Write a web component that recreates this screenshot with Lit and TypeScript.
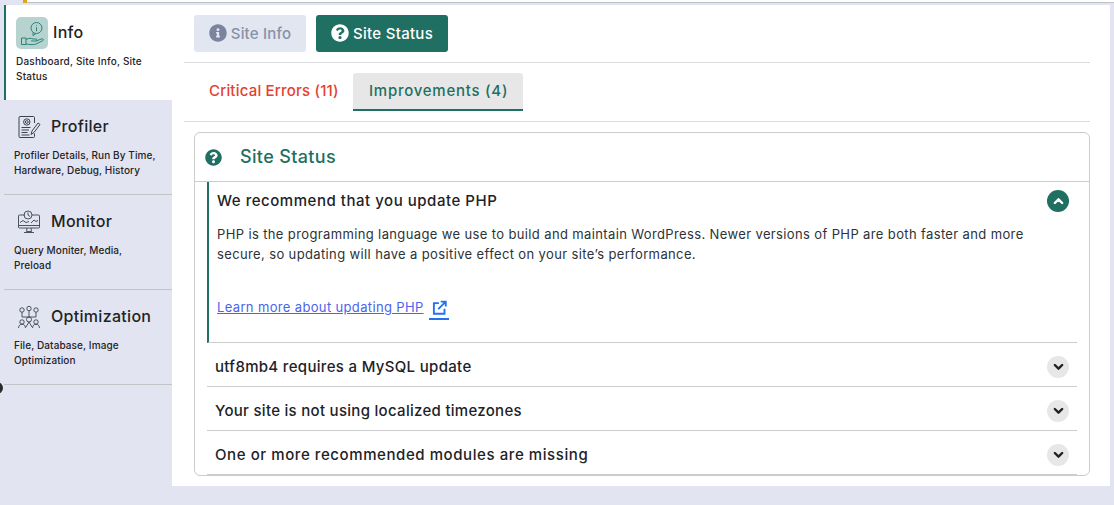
import { LitElement, html, css } from "lit";
import { customElement } from "lit/decorators.js";

const questionIcon = html`<svg viewBox="0 0 512 512"><path fill="currentColor" d="M504 256c0 137-111 248-248 248S8 393 8 256C8 119 119 8 256 8s248 111 248 248zM262.700 90c-54.500 0-89.300 23-116.500 63.800-3.500 5.300-2.400 12.400 2.700 16.300l34.700 26.300c5.200 3.900 12.600 3 16.700-2.100 17.900-22.700 30.100-35.800 57.300-35.800 20.400 0 45.700 13.100 45.700 32.900 0 15-12.400 22.700-32.500 34-23.500 13.200-54.600 29.600-54.600 70.700V300c0 6.600 5.400 12 12 12h56c6.600 0 12-5.400 12-12v-1.300c0-28.500 83.200-29.700 83.200-106.700 0-58-60.200-102-116.500-102zM256 338c-25.400 0-46 20.600-46 46 0 25.400 20.600 46 46 46s46-20.600 46-46c0-25.400-20.600-46-46-46z"/></svg>`;

const infoIcon = html`<svg viewBox="0 0 512 512"><path fill="#7a849c" d="M256 8C119 8 8 119 8 256c0 137 111 248 248 248s248-111 248-248C504 119 393 8 256 8zm0 110c23.200 0 42 18.800 42 42s-18.800 42-42 42-42-18.800-42-42 18.800-42 42-42zm56 254c0 6.600-5.400 12-12 12h-88c-6.600 0-12-5.400-12-12v-24c0-6.600 5.400-12 12-12h12v-64h-12c-6.600 0-12-5.400-12-12v-24c0-6.600 5.400-12 12-12h64c6.600 0 12 5.400 12 12v100h12c6.600 0 12 5.400 12 12v24z"/></svg>`;

const chevron = (up: boolean) => html`<svg class="chev" viewBox="0 0 12 8"><path fill="none" stroke="currentColor" stroke-width="2.600" stroke-linecap="round" stroke-linejoin="round" d=${up ? "M2 6.200 6 2.200l4 4" : "M2 1.800l4 4 4-4"}/></svg>`;

const handIcon = html`<svg class="mi" viewBox="0 0 32 32" fill="none" stroke="#2a8378" stroke-width="1"><circle cx="20.500" cy="11" r="5.500"/><path d="M17 15.500v3.200l3-2.300M20.500 8.200v.8M20.500 10.200v4"/><path d="M5.500 21h4.500v6.500H5.500zM10 22.500c3-1.500 5-1.500 7-.5h3c1.200 0 1.200 2-.2 2H15m5 0 6-2.200c1.500-.3 2 1.200.8 1.900l-7.300 3.500c-3 .8-6 .3-9.500-.2"/></svg>`;

const profilerIcon = html`<svg class="si" viewBox="0 0 24 24" fill="none" stroke="#39424e" stroke-width="1"><path d="M17.500 8V2.500a1 1 0 0 0-1-1H3a1 1 0 0 0-1 1v19a1 1 0 0 0 1 1h13.500a1 1 0 0 0 1-1v-3"/><circle cx="9.800" cy="7" r="3.200"/><circle cx="9.800" cy="7" r="1.400"/><path d="M4.500 12.500h9M4.500 15h7.500M4.500 17.500h6M4.500 20h8"/><path d="m14 19.500 1-3.500 6-8 2 1.500-6 8z"/></svg>`;

const monitorIcon = html`<svg class="si" viewBox="0 0 24 24" fill="none" stroke="#39424e" stroke-width=".9"><path d="M8 5H2.500a1 1 0 0 0-1 1v11a1 1 0 0 0 1 1h19a1 1 0 0 0 1-1V6a1 1 0 0 0-1-1H15"/><circle cx="11" cy="5" r="4"/><path d="M11 2.500V5l2 1.500M1.500 15.500h21M3 12.500l3-2 3 2 3-1M14 13l3-3 2 1.500 2-1M10 18l-.5 3.500h5L14 18M7 22.500h10"/></svg>`;

const optimIcon = html`<svg class="si" viewBox="0 0 24 24" fill="none" stroke="#39424e" stroke-width=".9"><circle cx="5" cy="5" r="2.200"/><circle cx="12" cy="3.500" r="2.200"/><circle cx="19" cy="5" r="2.200"/><path d="M5 7.200V12M12 5.700V12M19 7.200V12M5 12h14"/><circle cx="12" cy="14.500" r="2.500"/><circle cx="5" cy="17" r="2.200"/><circle cx="19" cy="17" r="2.200"/><path d="M1.500 23c.3-2.500 1.500-3.800 3.500-3.800s3.200 1.300 3.500 3.800M15.500 23c.3-2.500 1.500-3.800 3.500-3.800s3.200 1.300 3.500 3.800M9 22l3-5 3 5"/></svg>`;

@customElement("app-root")
export class AppRoot extends LitElement {
  static styles = css`
    :host { display: block; position: relative; width: 1114px; height: 505px; background: #e2e5f1; font-family: "Inter", "Liberation Sans", sans-serif; color: #1d2327; overflow: hidden; }
    .dot { position: absolute; left: -9px; top: 382px; width: 12px; height: 12px; border-radius: 50%; background: #2b2b2b; }
    .strip { height: 5px; display: flex; padding-left: 23px; align-items: flex-start; }
    .orange { width: 4px; height: 3px; background: #dba617; }
    .bar { flex: 1; height: 3px; background: #fff; border-bottom: 1px solid #bfc1c9; box-sizing: border-box; }
    .frame { display: flex; padding-left: 4px; padding-right: 4px; }
    .side { width: 168px; flex: none; }
    .item { box-sizing: border-box; height: 95px; padding: 15px 12px 0 10px; border-bottom: 1px solid #c3c4c7; }
    .item.active { background: #fff; border-left: 2px solid #1f6f63; border-bottom: 0; padding: 12px 16px 0 10px; }
    .head { display: flex; align-items: center; gap: 10px; height: 24px; }
    .active .head { height: 32px; gap: 5px; }
    .iconbox { width: 32px; height: 32px; border-radius: 5px; background: #b6d3d0; display: flex; }
    .mi { width: 32px; height: 32px; }
    .si { width: 24px; height: 24px; margin-left: 3px; flex: none; }
    .title { font-size: 16px; font-weight: 500; letter-spacing: .3px; margin-bottom: 2px; }
    .sub { font-size: 10px; line-height: 15px; margin-top: 9px; font-weight: 500; letter-spacing: .1px; }
    .active .sub { margin-top: 5px; letter-spacing: .2px; }
    .main { width: 938px; height: 481px; background: #fff; box-sizing: border-box; padding: 0 20px 0 12px; }
    .btns { display: flex; gap: 10px; height: 58px; padding: 10px 10px 0 10px; box-sizing: border-box; border-bottom: 1px solid #dcdcde; }
    .btn { height: 37px; box-sizing: border-box; border-radius: 3px; display: flex; align-items: center; justify-content: center; gap: 4px; font-size: 15px; font-weight: 500; padding-bottom: 1px; }
    .btn svg { width: 18px; height: 18px; }
    .btn.info { width: 112px; background: #e1e6f0; color: #8791a8; letter-spacing: .2px; }
    .btn.status { width: 132px; background: #1f6f63; color: #fff; letter-spacing: .3px; }
    .tabs { display: flex; height: 59px; padding-top: 10px; box-sizing: border-box; border-bottom: 1px solid #dcdcde; align-items: flex-start; }
    .tab { height: 38px; box-sizing: border-box; display: flex; align-items: center; font-size: 15px; font-weight: 500; padding-bottom: 1px; border-bottom: 2px solid transparent; }
    .tab.crit { color: #e53f31; width: 169px; padding-left: 25px; letter-spacing: .2px; }
    .tab.imp { color: #1f6f63; background: #e7e7e7; border-bottom-color: #1f6f63; border-radius: 3px 3px 0 0; width: 170px; padding-left: 16px; letter-spacing: .75px; }
    .card { margin: 10px 0 0 10px; height: 344px; box-sizing: border-box; border: 1px solid #ccc; border-radius: 6px; overflow: hidden; }
    .cardhead { height: 49px; box-sizing: border-box; border-bottom: 1px solid #ccc; display: flex; align-items: center; padding-left: 10px; gap: 18px; color: #1f6f63; }
    .cardhead svg { width: 17px; height: 17px; }
    .cardhead span { font-size: 18px; font-weight: 500; letter-spacing: .35px; margin-bottom: 1px; }
    .list { margin: 0 12px 0 12px; }
    .row { height: 44px; box-sizing: border-box; border-bottom: 1px solid #ccc; display: flex; align-items: center; justify-content: space-between; padding: 3px 8px 0; font-size: 15px; font-weight: 500; }
    .row.last { border-bottom: 2px solid #ccc; height: 45px; }
    .row .circle { margin-top: 2px; }
    .open { border-left: 2px solid #1f6f63; border-bottom: 1px solid #ccc; height: 161px; box-sizing: border-box; padding: 0 8px; }
    .open .row { border: 0; padding: 0; height: 38px; }
    .open .row .circle { margin-top: 0; }
    .open .row .q { margin-bottom: 2px; letter-spacing: .53px; }
    .open p { margin: 0; font-size: 13px; line-height: 20px; padding: 4px 20px 0 0; letter-spacing: .37px; color: #2c3338; }
    .more { margin-top: 36px; font-size: 13px; display: flex; align-items: flex-start; gap: 5px; }
    .more a { color: #4a64ec; text-decoration: underline; line-height: 15px; letter-spacing: .35px; }
    .ext { display: flex; border-bottom: 2px solid #2271f1; padding: 0 2px 3px 3px; }
    .ext svg { width: 15px; height: 15px; }
    .circle { width: 22px; height: 22px; border-radius: 50%; display: flex; align-items: center; justify-content: center; background: #e7e7e7; color: #1d2327; flex: none; }
    .circle.up { background: #1f6f63; color: #fff; }
    .chev { width: 11px; height: 8px; }
  `;

  render() {
    const rows = [
      { text: "utf8mb4 requires a MySQL update", spacing: 0.32 },
      { text: "Your site is not using localized timezones", spacing: 0.29 },
      { text: "One or more recommended modules are missing", spacing: 0.58 },
    ];
    return html`
      <div class="strip"><div class="orange"></div><div class="bar"></div></div>
      <div class="frame">
        <div class="side">
          <div class="item active">
            <div class="head"><div class="iconbox">${handIcon}</div><span class="title">Info</span></div>
            <div class="sub">Dashboard, Site Info, Site Status</div>
          </div>
          <div class="item">
            <div class="head">${profilerIcon}<span class="title">Profiler</span></div>
            <div class="sub">Profiler Details, Run By Time, Hardware, Debug, History</div>
          </div>
          <div class="item">
            <div class="head">${monitorIcon}<span class="title">Monitor</span></div>
            <div class="sub">Query Moniter, Media, Preload</div>
          </div>
          <div class="item">
            <div class="head">${optimIcon}<span class="title">Optimization</span></div>
            <div class="sub">File, Database, Image Optimization</div>
          </div>
        </div>
        <div class="main">
          <div class="btns">
            <div class="btn info">${infoIcon}Site Info</div>
            <div class="btn status">${questionIcon}Site Status</div>
          </div>
          <div class="tabs">
            <div class="tab crit">Critical Errors (11)</div>
            <div class="tab imp">Improvements (4)</div>
          </div>
          <div class="card">
            <div class="cardhead">${questionIcon}<span>Site Status</span></div>
            <div class="list">
              <div class="open">
                <div class="row"><span class="q">We recommend that you update PHP</span><span class="circle up">${chevron(true)}</span></div>
                <p>PHP is the programming language we use to build and maintain WordPress. Newer versions of PHP are both faster and more secure, so updating will have a positive effect on your site’s performance.</p>
                <div class="more"><a>Learn more about updating PHP </a><span class="ext"><svg viewBox="0 0 24 24" fill="none" stroke="#2271f1" stroke-width="3"><path d="M11 5H3v17h17v-8M14 2.500h8v8M22 2.500 10 14.500"/></svg></span></div>
              </div>
              ${rows.map((r, i) => html`<div class="row ${i === 2 ? "last" : ""}"><span style="letter-spacing:${r.spacing}px">${r.text}</span><span class="circle">${chevron(false)}</span></div>`)}
            </div>
          </div>
        </div>
      </div>
      <div class="dot"></div>
    `;
  }
}
